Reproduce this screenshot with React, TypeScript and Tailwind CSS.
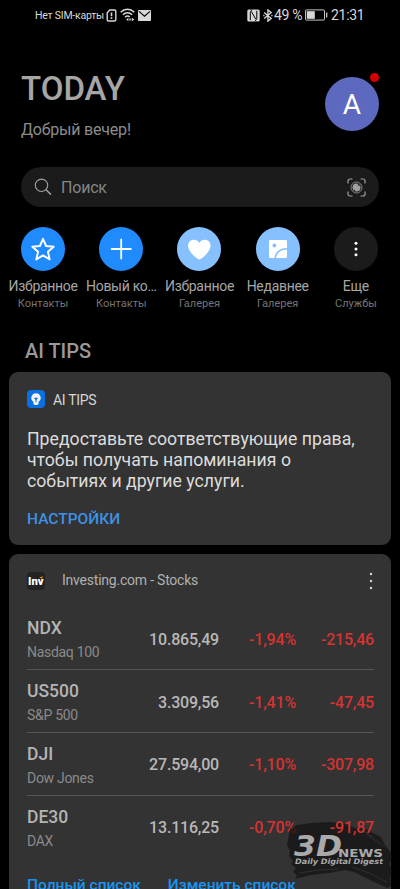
import type { ReactNode } from "react";

const shortcuts: {
  title: string;
  source: string;
  color: string;
  icon: ReactNode;
}[] = [
  {
    title: "Избранное",
    source: "Контакты",
    color: "bg-[#1f8bff]",
    icon: (
      <path
        d="M22 11.8l3.1 7.2 7.6.7-5.8 5.1 1.8 7.6-6.7-4-6.7 4 1.8-7.6-5.8-5.1 7.6-.7z"
        fill="none"
        stroke="#fff"
        strokeWidth="1.9"
        strokeLinejoin="round"
      />
    ),
  },
  {
    title: "Новый ко…",
    source: "Контакты",
    color: "bg-[#1f8bff]",
    icon: (
      <path
        d="M22.2 12.4v19.2M12.6 22h19.2"
        stroke="#fff"
        strokeWidth="1.8"
        strokeLinecap="round"
      />
    ),
  },
  {
    title: "Избранное",
    source: "Галерея",
    color: "bg-[#86c0ff]",
    icon: (
      <path
        d="M22.300 32.600c-1.200 0-11.300-7.300-11.300-14 0-3.500 2.600-5.900 5.700-5.900 2.400 0 4.400 1.200 5.600 3.200 1.200-2 3.200-3.200 5.600-3.200 3.100 0 5.700 2.400 5.700 5.900 0 6.700-10.100 14-11.300 14z"
        fill="#fff"
      />
    ),
  },
  {
    title: "Недавнее",
    source: "Галерея",
    color: "bg-[#86c0ff]",
    icon: (
      <>
        <rect x="13" y="13" width="18" height="18" rx="1.3" fill="#fff" />
        <circle cx="18.4" cy="18.5" r="1.9" fill="#86c0ff" />
        <path
          d="M19.3 31.2c.5-5.5 4.5-9.3 11.9-9.5"
          fill="none"
          stroke="#86c0ff"
          strokeWidth="1.6"
        />
      </>
    ),
  },
  {
    title: "Еще",
    source: "Службы",
    color: "bg-[#1b1b1b]",
    icon: (
      <g fill="#fff">
        <circle cx="22" cy="16.3" r="1.5" />
        <circle cx="22" cy="22" r="1.5" />
        <circle cx="22" cy="27.7" r="1.5" />
      </g>
    ),
  },
];

const stocks = [
  { code: "NDX", name: "Nasdaq 100", price: "10.865,49", percent: "-1,94%", change: "-215,46" },
  { code: "US500", name: "S&P 500", price: "3.309,56", percent: "-1,41%", change: "-47,45" },
  { code: "DJI", name: "Dow Jones", price: "27.594,00", percent: "-1,10%", change: "-307,98" },
  { code: "DE30", name: "DAX", price: "13.116,25", percent: "-0,70%", change: "-91,87" },
];

function StatusBar() {
  return (
    <div className="flex h-[30px] items-center pl-[35px] pr-9 text-[#d8d8d8]">
      <span className="w-[69px] pt-px text-[10.5px] tracking-[-0.22px] whitespace-nowrap">Нет SIM-карты</span>
      <svg className="ml-[2px]" width="11" height="13" viewBox="0 0 11 13">
        <path
          d="M3.8 1h4.7a1.3 1.3 0 0 1 1.3 1.3v8.4a1.3 1.3 0 0 1-1.3 1.3h-6A1.3 1.3 0 0 1 1.2 10.7V3.7z"
          fill="none"
          stroke="currentColor"
          strokeWidth="1.4"
        />
        <path d="M5.500 3.600v3.600M5.500 8.300v1.700" stroke="currentColor" strokeWidth="1.6" />
      </svg>
      <svg className="ml-[3px]" width="15" height="14" viewBox="0 0 15 14">
        <g fill="none" stroke="currentColor" strokeWidth="1.5">
          <path d="M.7 4.200c3.800-3.800 9.800-3.800 13.600 0" />
          <path d="M2.900 6.800c2.600-2.600 6.600-2.600 9.200 0" />
          <path d="M5.100 9.300c1.300-1.300 3.300-1.400 4.600-.4" />
        </g>
        <path d="M6.200 11.500L8.400 9.800v3.400zM14.400 11.500l-2.600-1.700v3.400zM9.400 10.500h1.400v2H9.400z" fill="currentColor" />
      </svg>
      <svg className="ml-[3px]" width="13" height="11" viewBox="0 0 13 11">
        <rect width="13" height="11" rx=".8" fill="currentColor" />
        <path d="M1 1.400l5.500 4.800L12 1.400" fill="none" stroke="#000" strokeWidth="1.2" />
      </svg>
      <svg className="ml-auto" width="13" height="13" viewBox="0 0 13 13">
        <rect x=".3" y=".5" width="12.4" height="12" rx="1.5" fill="currentColor" />
        <path
          d="M3.300 11.200V3.200c0-1 .8-1.200 1.300-.4l4 7.200c.4.800 1.200.6 1.200-.3V1.800M3.600.5l1.500 1.300M9.500 12.500L8 11.200"
          fill="none"
          stroke="#000"
          strokeWidth="1"
        />
      </svg>
      <svg className="ml-[3px]" width="10" height="13" viewBox="0 0 10 13">
        <path d="M1.200 3.400l7 6L4.900 12.100V.9l3.300 2.700-7 6" fill="none" stroke="currentColor" strokeWidth="1.3" />
        <path d="M.3 6.500h1.200M8.300 6.500h1.200" stroke="currentColor" strokeWidth="1.3" />
      </svg>
      <span className="ml-[1px] w-[31px] text-[14px] tracking-[-0.3px] whitespace-nowrap">49 %</span>
      <svg width="23" height="12" viewBox="0 0 23 12">
        <rect x=".5" y=".9" width="19" height="10.2" rx="1" fill="none" stroke="currentColor" strokeWidth=".9" />
        <rect x="1.8" y="2.2" width="8" height="7.6" fill="currentColor" />
        <path d="M21.700 3.500v5" stroke="currentColor" strokeWidth="1.2" />
      </svg>
      <span className="ml-[3px] w-[33px] text-[14px] tracking-[-0.3px] whitespace-nowrap">21:31</span>
    </div>
  );
}

function Header() {
  return (
    <header className="flex justify-between px-[21px] pt-[39px]">
      <div>
        <h1 className="text-[33px] leading-10 font-medium text-[#a6a6a6]">TODAY</h1>
        <p className="mt-[11px] text-[16px] leading-5 tracking-[-0.2px] text-[#8c8c8c]">Добрый вечер!</p>
      </div>
      <div className="relative mt-[8px] flex h-[54px] w-[54px] items-center justify-center rounded-full bg-[#5d69bf] pt-[2px] text-[28px] text-white">
        А
        <span className="absolute -top-[4px] right-0 h-[9px] w-[9px] rounded-full bg-[#d50000]" />
      </div>
    </header>
  );
}

function Search() {
  return (
    <div className="mx-[21px] mt-[27px] flex h-10 items-center rounded-full bg-[#1b1b1b] px-[13px]">
      <svg width="18" height="18" viewBox="0 0 18 18" fill="none" stroke="#a0a0a0">
        <circle cx="7.5" cy="7.3" r="6.2" strokeWidth="1.1" />
        <path d="M12 11.800l5 4.800" strokeWidth="1.5" />
      </svg>
      <span className="ml-[9px] pt-px text-[16px] tracking-[-0.2px] text-[#858585]">Поиск</span>
      <svg className="ml-auto" width="19" height="19" viewBox="0 0 19 19" fill="none" stroke="#a0a0a0">
        <path
          d="M1 5.500V3a2 2 0 0 1 2-2h2.500M13.500 1H16a2 2 0 0 1 2 2v2.500M18 13.500V16a2 2 0 0 1-2 2h-2.500M5.500 18H3a2 2 0 0 1-2-2v-2.500"
          strokeWidth="1.2"
        />
        <circle cx="9.5" cy="9.5" r="5.5" strokeWidth=".8" />
        <circle cx="9.5" cy="9.5" r="4" fill="#a0a0a0" stroke="none" />
        <path d="M10.500 7l1.500-1.300 1 2.500z" fill="#1b1b1b" stroke="none" />
        <path d="M6.800 11.800l1.200 1" stroke="#1b1b1b" strokeWidth="1" />
      </svg>
    </div>
  );
}

function Shortcuts() {
  return (
    <div className="mt-[20px] ml-1 grid w-[391px] grid-cols-5">
      {shortcuts.map((item) => (
        <div key={item.title + item.source} className="flex flex-col items-center whitespace-nowrap">
          <div className={"h-[44px] w-[44px] rounded-full " + item.color}>
            <svg width="44" height="44" viewBox="0 0 44 44">
              {item.icon}
            </svg>
          </div>
          <span className="mt-[6px] text-[14px] leading-[18px] tracking-[-0.3px] text-[#a6a6a6]">{item.title}</span>
          <span className="mt-[1px] text-[11px] leading-4 text-[#757575]">{item.source}</span>
        </div>
      ))}
    </div>
  );
}

function TipsCard() {
  return (
    <section className="mx-[9px] mt-[9px] h-[172.5px] rounded-[9px] bg-[#333] px-[18px] pt-[18px]">
      <div className="flex h-[19px] items-center">
        <svg className="mb-px" width="18" height="18" viewBox="0 0 18 18">
          <rect width="18" height="18" rx="4" fill="#0a6fe0" />
          <path
            d="M9 3.200a4.700 4.700 0 0 0-2.600 8.600v1.500c0 1 .7 1.700 1.700 1.700h1.800c1 0 1.700-.7 1.700-1.700v-1.500A4.700 4.700 0 0 0 9 3.200z"
            fill="#f2f2f2"
          />
          <path
            d="M9 12.200V8.600M7.700 8.200h2.600L9 9.600z"
            fill="#0a6fe0"
            stroke="#0a6fe0"
            strokeWidth="1"
          />
        </svg>
        <span className="ml-[8px] pt-px text-[14px] tracking-[-0.3px] text-[#d6d6d6]">AI TIPS</span>
      </div>
      <p className="mt-[20px] text-[17.7px] leading-[21px] whitespace-nowrap text-[#dcdcdc]">
        Предоставьте соответствующие права,
        <br />
        чтобы получать напоминания о
        <br />
        событиях и другие услуги.
      </p>
      <button className="mt-[17px] block text-[15.5px] leading-5 font-medium text-[#3d92e6]">НАСТРОЙКИ</button>
    </section>
  );
}

function StocksCard() {
  return (
    <section className="mx-[9px] mt-[9px] h-[336px] overflow-hidden rounded-t-[9px] bg-[#333] pr-[17px] pl-[18px]">
      <div className="flex h-[54px] items-center">
        <svg width="18" height="18" viewBox="0 0 18 18">
          <rect width="18" height="18" rx="4" fill="#222" />
          <text
            x="1"
            y="13"
            fontSize="11"
            fontWeight="900"
            fill="#fff"
            textLength="15.5"
            lengthAdjust="spacingAndGlyphs"
          >
            Inv
          </text>
          <path d="M12.500 5.500l3.500-1.200-1 2.400z" fill="#f39200" />
        </svg>
        <span className="ml-[17px] text-[14px] tracking-[-0.22px] text-[#b0b0b0]">Investing.com - Stocks</span>
        <svg className="ml-auto" width="5" height="18" viewBox="0 0 5 18" fill="#d6d6d6">
          <circle cx="2" cy="2" r="1.2" />
          <circle cx="2" cy="9" r="1.2" />
          <circle cx="2" cy="16" r="1.2" />
        </svg>
      </div>
      <div className="divide-y divide-[#555]">
        {stocks.map((stock) => (
          <div
            key={stock.code}
            className="flex h-[62.7px] items-center pt-[3px] text-[16px] font-medium tracking-[-0.2px]"
          >
            <div className="w-[92px]">
              <div className="text-[17.5px] leading-[22px] tracking-normal text-[#b4b4b4]">{stock.code}</div>
              <div className="mt-[3px] text-[14px] leading-5 font-normal tracking-[-0.3px] text-[#8a8a8a]">
                {stock.name}
              </div>
            </div>
            <div className="w-[100px] text-right text-[#b8b8b8]">{stock.price}</div>
            <div className="w-[77px] text-right text-[#d63232]">{stock.percent}</div>
            <div className="relative z-10 w-[78px] text-right text-[#d63232]">{stock.change}</div>
          </div>
        ))}
      </div>
      <div className="mt-[17px] flex gap-[27px] text-[15.5px] leading-5 font-medium whitespace-nowrap text-[#1994ee]">
        <span>Полный список</span>
        <span>Изменить список</span>
      </div>
    </section>
  );
}

function Watermark() {
  return (
    <svg className="absolute right-[7px] bottom-0" width="108" height="70" viewBox="285 819 108 70">
      <path
        d="M290 829l7-4 14-2 19-1 18 2 6 3 12 2 9 5 6 3 4 8 6 8 1 5-3 6 3 7-2 6 1 8-3 3-16-7-18-9-9-2-16 3-18 2-16 4 2-4-4-3 3-4-5-4 2-3-4-5 1-5-3-6z"
        fill="#151515"
        fillOpacity=".78"
      />
      <path
        d="M345 824l16 6 12 7M352 867l17 6 18 9M299 873l20-3 20-1M366 834l19 13"
        fill="none"
        stroke="#333"
        strokeWidth=".8"
      />
      <g fill="#aaa" fontFamily="'DejaVu Sans', sans-serif" fontWeight="bold">
        <text x="294" y="856" fontSize="28" fontStyle="italic" textLength="48" lengthAdjust="spacingAndGlyphs">
          3D
        </text>
        <text x="338" y="856.5" fontSize="11" textLength="45" lengthAdjust="spacingAndGlyphs">
          NEWS
        </text>
        <text x="295" y="864" fontSize="7.5" fontStyle="italic" textLength="88" lengthAdjust="spacingAndGlyphs">
          Daily Digital Digest
        </text>
      </g>
    </svg>
  );
}

export default function App() {
  return (
    <div className="relative h-[889px] w-[400px] overflow-hidden bg-black font-['Roboto',sans-serif]">
      <StatusBar />
      <Header />
      <Search />
      <Shortcuts />
      <h2 className="mt-[27px] ml-[25px] text-[20px] leading-6 font-medium text-[#999]">AI TIPS</h2>
      <TipsCard />
      <StocksCard />
      <Watermark />
    </div>
  );
}
